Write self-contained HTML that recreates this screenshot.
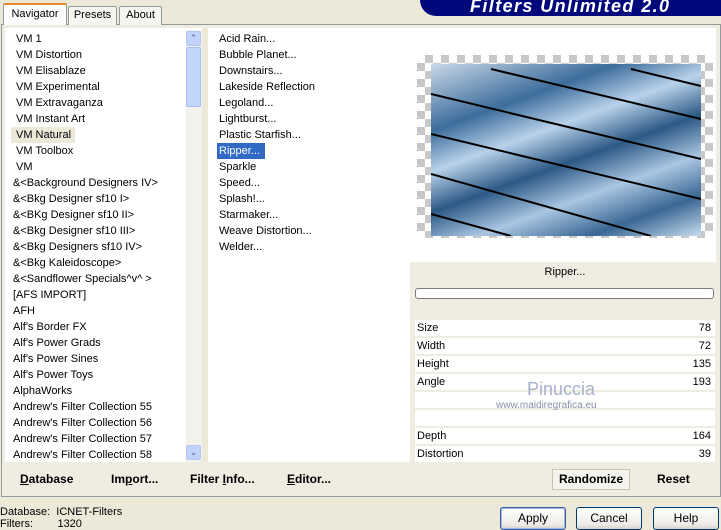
<!DOCTYPE html>
<html><head><meta charset="utf-8"><style>
*{margin:0;padding:0;box-sizing:border-box}
body{width:721px;height:530px;background:#ECE9D8;font-family:"Liberation Sans",sans-serif;font-size:11px;color:#000;position:relative;overflow:hidden}
.a{position:absolute}
.tab{position:absolute;top:6px;height:19px;border:1px solid #919B9C;border-bottom:none;background:#F6F5EF;font-size:11px;text-align:center;line-height:17px;border-radius:2px 2px 0 0}
.list div{height:16px;line-height:16px;white-space:nowrap}
.row{position:absolute;left:415px;width:300px;height:16px;background:#fff;line-height:16px;padding:0 2px}
.row span{position:absolute;right:4px}
.btn{position:absolute;border:1px solid #003C74;border-radius:3px;background:linear-gradient(#fff,#ECEBE6 80%,#D6D0C5);text-align:center;font-size:12px}
.b{font-weight:bold;font-size:12px;position:absolute;top:472px}
</style></head><body>
<div class="a" style="left:420px;top:0;width:301px;height:16px;background:#00087C;border-bottom-left-radius:22px"></div>
<div class="a" style="left:470px;top:-3px;color:#fff;font-weight:bold;font-style:italic;font-size:18px;letter-spacing:1.4px;line-height:18px">Filters Unlimited 2.0</div>
<div class="a" style="left:1px;top:24px;width:720px;height:472px;border:1px solid #919B9C;border-bottom:none;background:#EFEDE2"></div>
<div class="tab" style="left:3px;top:3px;width:64px;height:22px;background:#FCFCFE;border-top:2px solid #E68B2C;z-index:2;line-height:19px">Navigator</div>
<div class="tab" style="left:68px;width:49px">Presets</div>
<div class="tab" style="left:119px;width:43px">About</div>
<div class="a" style="left:5px;top:28px;width:197px;height:434px;background:#fff"></div>
<div class="a list" style="left:11px;top:31px;width:175px">
<div style="padding-left:5px">VM 1</div><div style="padding-left:5px">VM Distortion</div><div style="padding-left:5px">VM Elisablaze</div><div style="padding-left:5px">VM Experimental</div><div style="padding-left:5px">VM Extravaganza</div><div style="padding-left:5px">VM Instant Art</div><div style="padding-left:5px;background:#ECE9D8;width:64px">VM Natural</div><div style="padding-left:5px">VM Toolbox</div><div style="padding-left:5px">VM</div>
<div style="padding-left:2px">&amp;&lt;Background Designers IV&gt;</div><div style="padding-left:2px">&amp;&lt;Bkg Designer sf10 I&gt;</div><div style="padding-left:2px">&amp;&lt;BKg Designer sf10 II&gt;</div><div style="padding-left:2px">&amp;&lt;Bkg Designer sf10 III&gt;</div><div style="padding-left:2px">&amp;&lt;Bkg Designers sf10 IV&gt;</div><div style="padding-left:2px">&amp;&lt;Bkg Kaleidoscope&gt;</div><div style="padding-left:2px">&amp;&lt;Sandflower Specials^v^ &gt;</div><div style="padding-left:2px">[AFS IMPORT]</div><div style="padding-left:2px">AFH</div><div style="padding-left:2px">Alf's Border FX</div><div style="padding-left:2px">Alf's Power Grads</div><div style="padding-left:2px">Alf's Power Sines</div><div style="padding-left:2px">Alf's Power Toys</div><div style="padding-left:2px">AlphaWorks</div><div style="padding-left:2px">Andrew's Filter Collection 55</div><div style="padding-left:2px">Andrew's Filter Collection 56</div><div style="padding-left:2px">Andrew's Filter Collection 57</div><div style="padding-left:2px">Andrew's Filter Collection 58</div>
</div>
<div class="a" style="left:186px;top:30px;width:16px;height:432px;background:#F3F1EC"></div>
<div class="a" style="left:186px;top:31px;width:15px;height:15px;background:#C1D3FB;border:1px solid #B4C8F6;border-radius:2px;color:#4D6185;font-size:9px;text-align:center;line-height:12px">⌃</div>
<div class="a" style="left:186px;top:47px;width:15px;height:60px;background:#C4D5FC;border:1px solid #A7BDF5;border-radius:2px"></div>
<div class="a" style="left:186px;top:445px;width:15px;height:15px;background:#C1D3FB;border:1px solid #B4C8F6;border-radius:2px;color:#4D6185;font-size:9px;text-align:center;line-height:12px">⌄</div>
<div class="a" style="left:202px;top:28px;width:6px;height:434px;background:#ECE9D8"></div>
<div class="a" style="left:208px;top:28px;width:202px;height:434px;background:#fff"></div>
<div class="a list" style="left:219px;top:31px">
<div>Acid Rain...</div><div>Bubble Planet...</div><div>Downstairs...</div><div>Lakeside Reflection</div><div>Legoland...</div><div>Lightburst...</div><div>Plastic Starfish...</div><div><span style="background:#316AC5;color:#fff;padding:0 2px 0 2px;margin-left:-2px;display:inline-block;width:48px">Ripper...</span></div><div>Sparkle</div><div>Speed...</div><div>Splash!...</div><div>Starmaker...</div><div>Weave Distortion...</div><div>Welder...</div>
</div>
<div class="a" style="left:410px;top:28px;width:306px;height:234px;background:#fff"></div>
<div class="a" style="left:417px;top:55px;width:296px;height:183px;background:repeating-conic-gradient(#c8c8c8 0 25%,#fff 0 50%) 0 0/16px 16px"></div>
<div class="a" style="left:431px;top:64px;width:270px;height:172px;background:linear-gradient(160deg,#c9d8e8 0%,#3d6d9c 25%,#b9d2ea 40%,#2c5985 55%,#aac6e2 70%,#3a6793 85%,#c6dcef 100%)"></div>
<svg class="a" style="left:431px;top:64px" width="270" height="172"><g stroke="#000" stroke-width="2" fill="none"><path d="M0 30 L270 95"/><path d="M0 70 L270 135"/><path d="M0 110 L220 172"/><path d="M0 150 L80 172"/><path d="M60 5 L270 55"/><path d="M200 5 L270 22"/></g></svg>
<div class="a" style="left:415px;top:266px;width:300px;text-align:center;font-size:11px">Ripper...</div>
<div class="a" style="left:415px;top:288px;width:299px;height:11px;border:1px solid #7A7A7A;border-radius:3px;background:#fff"></div>
<div class="row" style="top:320px">Size<span>78</span></div>
<div class="row" style="top:338px">Width<span>72</span></div>
<div class="row" style="top:356px">Height<span>135</span></div>
<div class="row" style="top:374px">Angle<span>193</span></div>
<div class="row" style="top:392px"></div>
<div class="row" style="top:410px"></div>
<div class="row" style="top:428px">Depth<span>164</span></div>
<div class="row" style="top:446px">Distortion<span>39</span></div>
<div class="a" style="left:527px;top:379px;color:#A8B0CC;font-size:18px">Pinuccia</div>
<div class="a" style="left:496px;top:400px;color:#8890A8;font-size:10px">www.maidiregrafica.eu</div>
<div class="a" style="left:552px;top:469px;width:78px;height:21px;border:1px solid #c8c4b4;background:#F4F3EE;font-weight:bold;font-size:12px;text-align:center;line-height:19px">Randomize</div>
<div class="b" style="left:657px">Reset</div>
<div class="b" style="left:20px"><u>D</u>atabase</div>
<div class="b" style="left:111px">Im<u>p</u>ort...</div>
<div class="b" style="left:190px">Filter <u>I</u>nfo...</div>
<div class="b" style="left:287px"><u>E</u>ditor...</div>
<div class="a" style="left:1px;top:496px;width:720px;height:1px;background:#919B9C"></div>
<div class="a" style="left:0;top:506px;line-height:12px">Database:&nbsp;&nbsp;ICNET-Filters<br>Filters:&nbsp;&nbsp;&nbsp;&nbsp;&nbsp;&nbsp;&nbsp;&nbsp;1320</div>
<div class="btn" style="left:500px;top:507px;width:66px;height:23px;line-height:21px;border-color:#3C5E9A;box-shadow:inset 0 0 0 1px #9DB5E8">Apply</div>
<div class="btn" style="left:576px;top:507px;width:66px;height:23px;line-height:21px">Cancel</div>
<div class="btn" style="left:653px;top:507px;width:66px;height:23px;line-height:21px">Help</div>
</body></html>
